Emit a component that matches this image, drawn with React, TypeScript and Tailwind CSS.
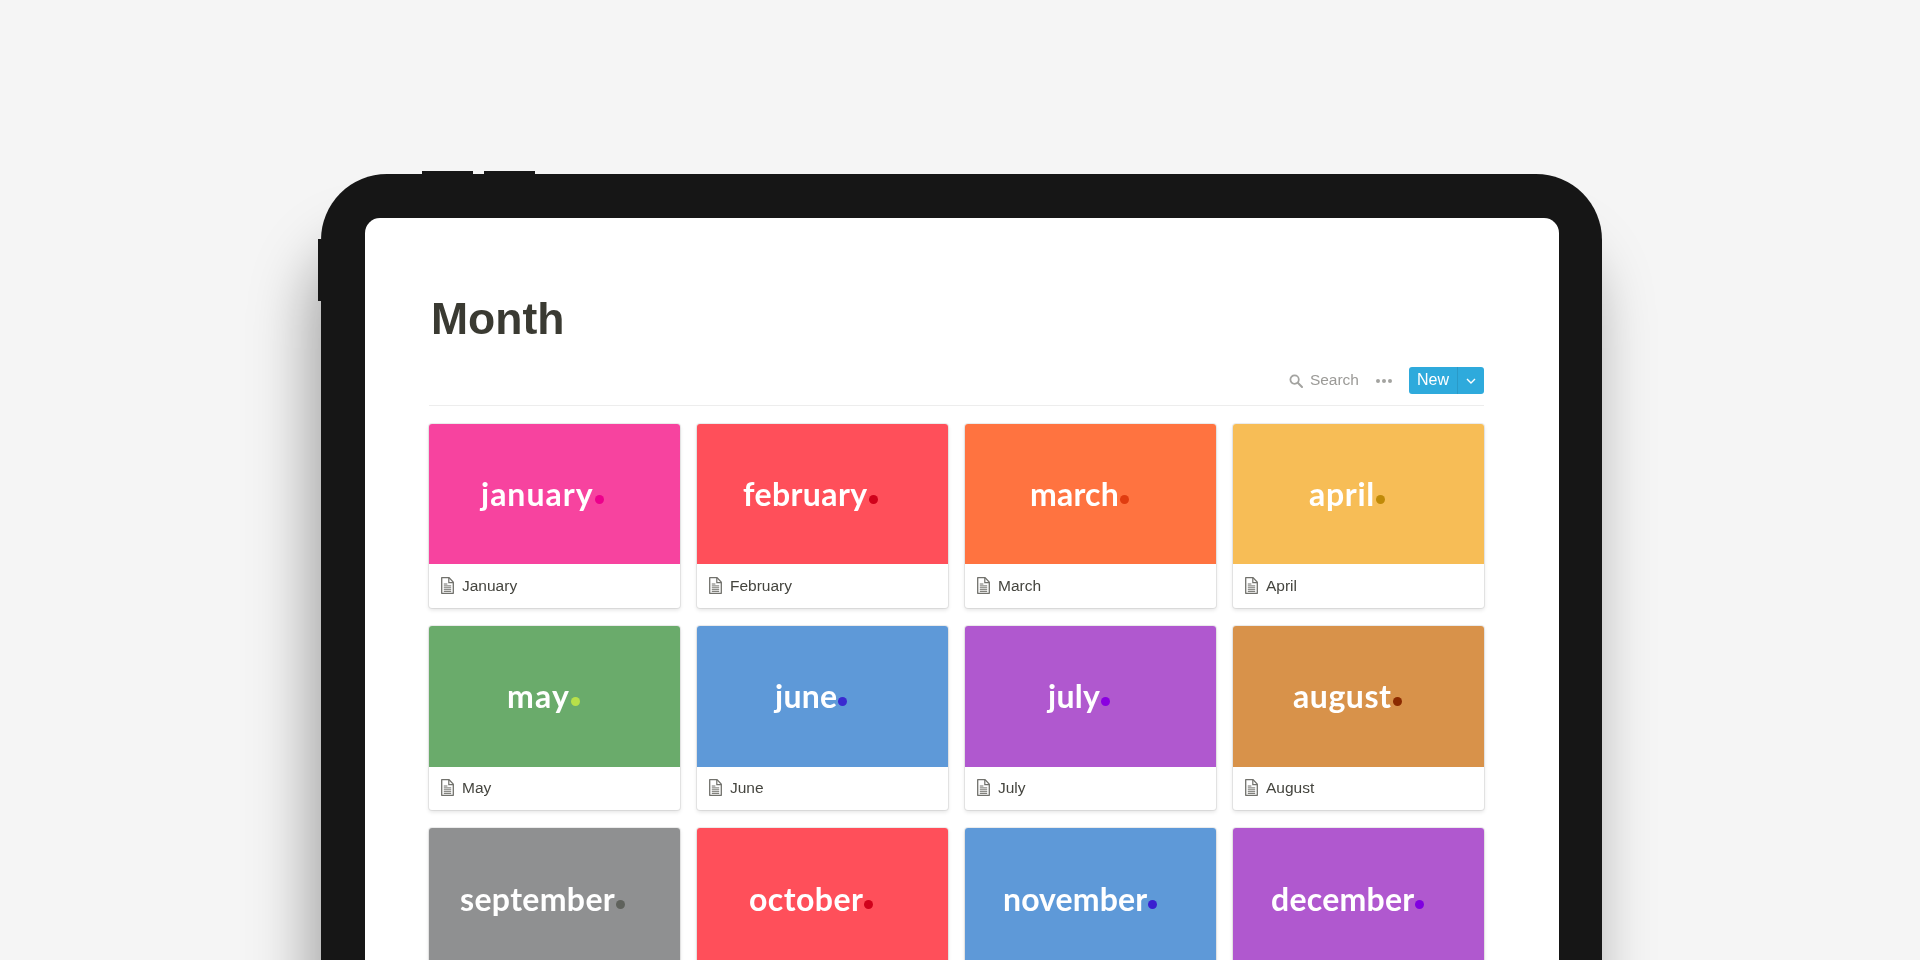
const months = [
  { word: "january", label: "January", bg: "bg-[#f7439f]", dot: "bg-[#ec008c]", offset: "pl-[52px]", spacing: "tracking-[1px]" },
  { word: "february", label: "February", bg: "bg-[#ff4f5a]", dot: "bg-[#d0021b]", offset: "pl-[46px]", spacing: "tracking-[0.4px]" },
  { word: "march", label: "March", bg: "bg-[#ff7340]", dot: "bg-[#e03c10]", offset: "pl-[65px]", spacing: "tracking-[0.2px]" },
  { word: "april", label: "April", bg: "bg-[#f7bd56]", dot: "bg-[#c08a08]", offset: "pl-[76px]", spacing: "tracking-[0.7px]" },
  { word: "may", label: "May", bg: "bg-[#6aab6b]", dot: "bg-[#b8e04a]", offset: "pl-[78px]", spacing: "tracking-[1.15px]" },
  { word: "june", label: "June", bg: "bg-[#5e99d8]", dot: "bg-[#3a2ad0]", offset: "pl-[78px]", spacing: "tracking-[0.25px]" },
  { word: "july", label: "July", bg: "bg-[#b058cf]", dot: "bg-[#8a00e0]", offset: "pl-[83px]", spacing: "tracking-[0.25px]" },
  { word: "august", label: "August", bg: "bg-[#d8924a]", dot: "bg-[#8b2a00]", offset: "pl-[60px]", spacing: "tracking-[0.55px]" },
  { word: "september", label: "September", bg: "bg-[#8f9091]", dot: "bg-[#5f625c]", offset: "pl-[31px]", spacing: "tracking-[0.35px]" },
  { word: "october", label: "October", bg: "bg-[#ff4f5a]", dot: "bg-[#d0021b]", offset: "pl-[52px]", spacing: "tracking-[0.45px]" },
  { word: "november", label: "November", bg: "bg-[#5e99d8]", dot: "bg-[#3a1fd0]", offset: "pl-[38px]", spacing: "tracking-[0.1px]" },
  { word: "december", label: "December", bg: "bg-[#b058cf]", dot: "bg-[#8000e0]", offset: "pl-[38px]", spacing: "tracking-[0.25px]" },
];

function PageIcon() {
  return (
    <svg width="13" height="17" viewBox="0 0 13 17" fill="none" className="shrink-0 text-[#71716c] blur-[0.3px]">
      <path d="M0.7 0.7h7.4l4.2 4.4v11.2H0.7z" stroke="currentColor" strokeWidth="1.3" strokeLinejoin="round" />
      <path d="M7.8 1v4.6h4.4" stroke="currentColor" strokeWidth="1.2" />
      <path d="M2.8 7h3.6M2.8 8.9h7.4M2.8 10.8h7.4M2.8 12.7h7.4M2.8 14.4h7.4" stroke="currentColor" strokeWidth="1" />
    </svg>
  );
}

function SearchIcon() {
  return (
    <svg width="14" height="14" viewBox="0 0 14 14" fill="none" className="text-[#a3a3a0]">
      <circle cx="5.6" cy="5.6" r="4.2" stroke="currentColor" strokeWidth="1.8" />
      <path d="M8.8 8.8l4.2 4.2" stroke="currentColor" strokeWidth="2" strokeLinecap="round" />
    </svg>
  );
}

function MonthCard({ m }: { m: (typeof months)[number] }) {
  return (
    <div className="rounded-[3px] bg-white overflow-hidden shadow-[0_0_0_1px_rgba(15,15,15,0.07),0_2px_4px_rgba(15,15,15,0.12)]">
      <div className={`h-[140.4px] flex items-center ${m.bg} ${m.offset}`}>
        <span className={`flex items-baseline font-['Lato',sans-serif] font-bold text-[32px] leading-none text-white blur-[0.6px] ${m.spacing}`}>
          {m.word}
          <span className={`ml-[1px] w-[9px] h-[9px] rounded-full -translate-y-[2px] ${m.dot}`} />
        </span>
      </div>
      <div className="h-[43.8px] flex items-center gap-[8px] pl-[12px] pb-[2px] text-[15.5px] text-[#45453f]">
        <PageIcon />
        <span className="blur-[0.3px]">{m.label}</span>
      </div>
    </div>
  );
}

export default function App() {
  return (
    <div className="h-[960px] overflow-hidden bg-[#f5f5f5] pt-[174px] font-['Liberation_Sans',Arial,sans-serif]">
      <div className="relative ml-[321px] w-[1281px] h-[900px] bg-[#161616] rounded-t-[66px] pt-[44px] pl-[44px] pr-[43px] shadow-[-10px_70px_60px_rgba(0,0,0,0.35)]">
        <div className="absolute -top-[3px] left-[101px] w-[51px] h-[3px] bg-[#161616]" />
        <div className="absolute -top-[3px] left-[163px] w-[51px] h-[3px] bg-[#161616]" />
        <div className="absolute -left-[3px] top-[65px] w-[3px] h-[62px] bg-[#161616]" />
        <div className="h-full bg-white rounded-t-[15px] pl-[64px] pr-[75px] pt-[76px]">
          <h1 className="pl-[2px] text-[44.5px] leading-[50px] font-bold text-[#3a3a32] blur-[0.4px]">Month</h1>
          <div className="mt-[23px] h-[39px] flex items-start justify-end gap-[17px] border-b border-[#ededed]">
            <div className="h-[27px] flex items-center gap-[7px] text-[15.5px] text-[#9b9a97]">
              <SearchIcon />
              <span className="blur-[0.3px] pb-[2px]">Search</span>
            </div>
            <div className="h-[27px] flex items-center gap-[2px]">
              <span className="w-[4px] h-[4px] rounded-full bg-[#a3a3a0]" />
              <span className="w-[4px] h-[4px] rounded-full bg-[#a3a3a0]" />
              <span className="w-[4px] h-[4px] rounded-full bg-[#a3a3a0]" />
            </div>
            <div className="w-[75px] h-[27px] flex rounded-[3px] bg-[#2eaadc] text-white text-[16px]">
              <div className="w-[49px] flex items-center justify-center border-r border-[#2a9ac8]">
                <span className="blur-[0.3px] pb-[2px]">New</span>
              </div>
              <div className="flex-1 flex items-center justify-center">
                <svg width="10" height="6" viewBox="0 0 10 6" fill="none">
                  <path d="M1 1l4 4 4-4" stroke="white" strokeWidth="1.4" />
                </svg>
              </div>
            </div>
          </div>
          <div className="mt-[18px] grid grid-cols-4 gap-x-[17px] gap-y-[18px]">
            {months.map((m) => (
              <MonthCard key={m.word} m={m} />
            ))}
          </div>
        </div>
      </div>
    </div>
  );
}
